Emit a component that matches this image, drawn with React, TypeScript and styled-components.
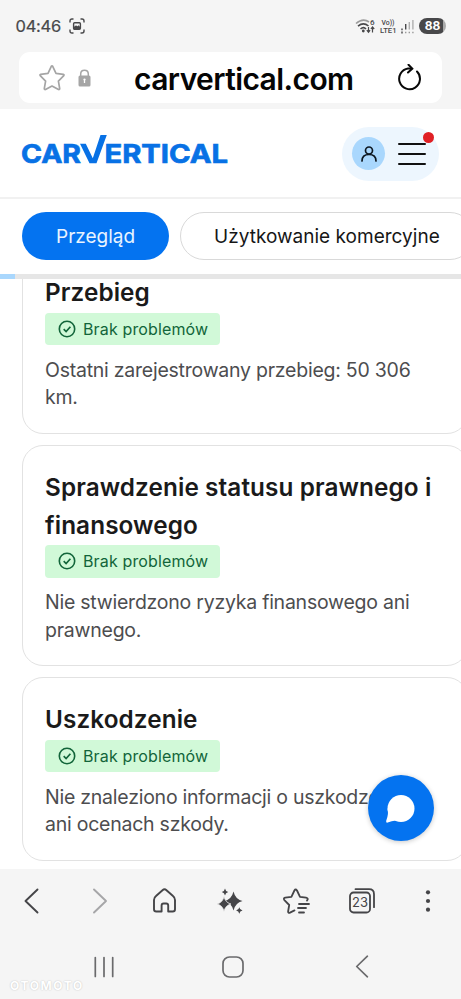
import React from 'react';
import styled, { createGlobalStyle } from 'styled-components';

const GlobalStyle = createGlobalStyle`
  * { box-sizing: border-box; }
  body { margin: 0; background: #fff; font-family: Inter, "Liberation Sans", sans-serif; }
`;

const Screen = styled.div`
  position: relative;
  width: 461px;
  height: 999px;
  display: flex;
  flex-direction: column;
  overflow: hidden;
  background: #fff;
`;

const BrowserTop = styled.header`
  height: 109px;
  flex: none;
  background: #f5f5f5;
  padding: 0 19px;
`;

const StatusBar = styled.div`
  height: 52px;
  margin: 0 -4px 0 -4px;
  display: flex;
  align-items: center;
  justify-content: space-between;
  color: #48484a;
`;

const StatusGroup = styled.div`
  display: flex;
  align-items: center;
`;

const Clock = styled.span`
  font-size: 16.5px;
  letter-spacing: -0.25px;
  margin-right: 8px;
  padding-left: 0.5px;
  -webkit-text-stroke: 0.2px #48484a;
`;

const Battery = styled.span`
  width: 27px;
  height: 16px;
  margin-left: 5px;
  border-radius: 8px;
  background: linear-gradient(90deg, #48484a 24px, #aaa 24px);
  color: #fff;
  font-size: 12px;
  font-weight: 700;
  line-height: 16px;
  text-align: center;
`;

const AddressBar = styled.div`
  height: 51px;
  border-radius: 11px;
  background: #fff;
  display: flex;
  align-items: center;
  padding: 0 21px 0 19px;
`;

const LockSlot = styled.span`
  display: flex;
  margin-left: 12px;
`;

const Address = styled.span`
  flex: 1;
  padding: 3px 0 0 43px;
  font-size: 30px;
  font-weight: 600;
  letter-spacing: -0.58px;
  line-height: 51px;
  color: #050505;
  white-space: nowrap;
`;

const SiteHeader = styled.div`
  height: 90px;
  flex: none;
  border-bottom: 2px solid #f1f1f1;
  display: flex;
  align-items: center;
  justify-content: space-between;
  padding: 1px 22px 0 20px;
`;

const AccountPill = styled.div`
  position: relative;
  width: 97px;
  height: 54px;
  border-radius: 27px;
  background: #edf6fe;
  display: flex;
  align-items: center;
  gap: 12px;
  padding-left: 10px;
`;

const Avatar = styled.div`
  width: 33px;
  height: 33px;
  border-radius: 50%;
  background: #a9d7fd;
  display: grid;
  place-items: center;
`;

const AlertDot = styled.i`
  position: absolute;
  right: 5px;
  top: 5px;
  width: 11px;
  height: 11px;
  border-radius: 50%;
  background: #e02025;
`;

const Tabs = styled.nav`
  height: 75px;
  flex: none;
  display: flex;
  gap: 11px;
  padding: 13px 0 0 22px;
`;

const Tab = styled.div<{ $active?: boolean }>`
  flex: none;
  width: ${(p) => (p.$active ? 147 : 294)}px;
  height: 48px;
  border-radius: 24px;
  border: ${(p) => (p.$active ? 'none' : '1.5px solid #d9d9d9')};
  background: ${(p) => (p.$active ? '#0473f0' : '#fff')};
  color: ${(p) => (p.$active ? '#e9f4ff' : '#161616')};
  font-size: 19px;
  letter-spacing: ${(p) => (p.$active ? 0 : 0.02)}px;
  line-height: ${(p) => (p.$active ? 50 : 48)}px;
  padding-left: ${(p) => (p.$active ? 34 : 33)}px;
  white-space: nowrap;
`;

const ProgressTrack = styled.div`
  height: 5px;
  flex: none;
  background: #e6e6e6;
`;

const ProgressFill = styled.div`
  width: 15px;
  height: 5px;
  background: #a9d7fd;
`;

const Content = styled.main`
  height: 590px;
  flex: none;
  overflow: hidden;
  padding-left: 22px;
`;

const CardList = styled.div`
  width: 446px;
  margin-top: -29px;
  display: flex;
  flex-direction: column;
  gap: 11px;
`;

const CardBox = styled.section<{ $height: number }>`
  height: ${(p) => p.$height}px;
  border: 1px solid #e2e2e2;
  border-radius: 21px;
  padding: 23px 0 0 22px;
  flex: none;
`;

const CardTitle = styled.h2`
  margin: 0;
  font-size: 24.3px;
  font-weight: 600;
  line-height: 37.6px;
  letter-spacing: 0.1px;
  color: #1a1a1a;
  white-space: nowrap;
`;

const Badge = styled.div`
  width: 175px;
  height: 32.5px;
  margin-top: 1px;
  border-radius: 4px;
  background: #d1f9d8;
  color: #12653a;
  display: flex;
  align-items: center;
  gap: 7px;
  padding-left: 13px;
  font-size: 16px;
  letter-spacing: 0.14px;
  white-space: nowrap;
`;

const CardText = styled.p`
  margin: 11.5px 0 0;
  font-size: 19.5px;
  line-height: 27.4px;
  letter-spacing: -0.24px;
  color: #4d4d4f;
  white-space: nowrap;
`;

const ChatButton = styled.div`
  position: absolute;
  left: 368px;
  top: 775px;
  width: 66px;
  height: 66px;
  border-radius: 50%;
  background: #0473f0;
  box-shadow: 0 1px 5px rgba(0, 0, 0, 0.22);
`;

const BrowserBottom = styled.footer`
  height: 130px;
  flex: none;
  background: #f5f5f5;
  display: flex;
  flex-direction: column;
`;

const Toolbar = styled.div`
  height: 65px;
  display: grid;
  grid-template-columns: repeat(7, 66px);
  justify-items: center;
  align-items: center;
  margin-left: -1px;
  padding-bottom: 1px;
`;

const SystemNav = styled.div`
  height: 65px;
  display: grid;
  grid-template-columns: repeat(3, 129px);
  justify-items: center;
  align-items: center;
  padding-left: 39.5px;
`;

const Watermark = styled.div`
  position: absolute;
  left: 10px;
  top: 978px;
  font-size: 12px;
  font-weight: 700;
  letter-spacing: 1.6px;
  line-height: 15px;
  color: #fff;
  text-shadow: 0 0 1.5px #b8b8b8;
`;

const ScreenshotIcon = () => (
  <svg width="16" height="16" viewBox="0 0 16 16" fill="none" stroke="#48484a" strokeWidth="1.4">
    <path d="M1 4.500V3Q1 1 3 1h1.500M11.500 1H13q2 0 2 2v1.500M15 11.500V13q0 2-2 2h-1.500M4.500 15H3q-2 0-2-2v-1.500" />
    <rect x="4.600" y="4.800" width="6.800" height="6.400" rx="1" />
    <path d="M5 9l2-1.600 1.400 1 1-.8L11 9v2H5z" fill="#48484a" stroke="none" />
    <path d="M5 9.500l2-1.500 1.500 1 1-.8 1.500 1.300" strokeWidth="1" />
  </svg>
);

const SignalIcons = () => (
  <svg width="59" height="18" viewBox="0 0 59 18" fill="none">
    <g stroke="#48484a" strokeWidth="1.6">
      <path d="M1 6.500Q8 .5 14 5" stroke="#9b9b9b" />
      <path d="M3 9.200Q8.300 4.800 13.500 9M5.500 12q3-2.600 5.500 0" />
    </g>
    <circle cx="8.300" cy="14" r="1.400" fill="#48484a" />
    <path d="M13.500 10v5M11.800 13.200l1.700 2 1.600-2M17.500 15.500v-5M15.900 12l1.600-2 1.700 2" stroke="#48484a" strokeWidth="1.2" />
    <g fill="#48484a" fontFamily="Roboto, sans-serif" fontWeight="500">
      <text x="15" y="8" fontSize="8">6</text>
      <text x="26.500" y="7.800" fontSize="7.500" textLength="13" lengthAdjust="spacingAndGlyphs">Vo))</text>
      <text x="25" y="16.200" fontSize="7.500" textLength="16.500" lengthAdjust="spacingAndGlyphs">LTE1</text>
    </g>
    <g strokeWidth="1.400">
      <path d="M47 11.500v1.700M50.700 7v5.500" stroke="#48484a" />
      <path d="M54.300 5v7.500M57.900 3v9.500" stroke="#b0b0b0" />
      <path d="M47 14.500v2" stroke="#48484a" />
      <path d="M50.700 14.800v1.500M54.300 14.800v1.500M57.900 14.800v1.500" stroke="#999" />
    </g>
  </svg>
);

const FavoriteIcon = () => (
  <svg width="28" height="28" viewBox="0 0 28 28" fill="none" stroke="#a5a5a5" strokeWidth="1.700" strokeLinejoin="round">
    <path d="M13.300 2.300q.7-1.100 1.400 0l3.300 7 7.300 1q1.200.4.500 1.300l-5.400 5.500 1.300 7.500q0 1.200-1.200.9L14 22l-6.500 3.500q-1.200.3-1.200-.9l1.300-7.500-5.400-5.500q-.7-.9.500-1.300l7.300-1z" />
  </svg>
);

const LockIcon = () => (
  <svg width="13" height="18" viewBox="0 0 13 18">
    <path d="M2.700 8V5q0-3.700 3.800-3.700T10.300 5v3" fill="none" stroke="#a5a5a5" strokeWidth="1.500" />
    <rect x=".5" y="6.500" width="12" height="11" rx="1.500" fill="#a5a5a5" />
    <path d="M6.500 10v4" stroke="#fff" strokeWidth="1.300" />
    <circle cx="6.500" cy="10.500" r="1.100" fill="#fff" />
  </svg>
);

const ReloadIcon = () => (
  <svg width="24" height="28" viewBox="0 0 24 28" fill="none" stroke="#080808" strokeWidth="2" strokeLinecap="round">
    <path d="M20 7.500A10.400 10.400 0 1 1 11 4.500h3.500" />
    <path d="M11.500 .8l3.800 3.800-4.300 3.900" />
  </svg>
);

const Logo = () => (
  <svg width="210" height="36" viewBox="0 0 210 36" overflow="visible">
    <g fill="#0871e5" stroke="#0871e5" strokeWidth=".7" fontFamily="Inter, sans-serif" fontWeight="700" fontSize="26.300">
      <text x="1" y="27" textLength="60" lengthAdjust="spacingAndGlyphs">CAR</text>
      <text x="84.500" y="27" textLength="123.500" lengthAdjust="spacingAndGlyphs">ERTICAL</text>
    </g>
    <path d="M60 7.800h5.800l7 14.500L80.500-1h6.300L76.500 27.200h-7z" fill="#0871e5" />
  </svg>
);

const PersonIcon = () => (
  <svg width="18" height="18" viewBox="0 0 18 18" fill="none" stroke="#0d1720" strokeWidth="1.700" strokeLinecap="round">
    <circle cx="9" cy="5.500" r="3.500" />
    <path d="M2 16q0-6.500 7-6.500T16 16" />
  </svg>
);

const MenuIcon = () => (
  <svg width="30" height="26" viewBox="0 0 30 26" stroke="#111" strokeWidth="2" strokeLinecap="round">
    <path d="M2 3h26M2 13h26M2 23h26" />
  </svg>
);

const CheckIcon = () => (
  <svg width="18" height="18" viewBox="0 0 18 18" fill="none" stroke="#12653a" strokeWidth="1.600">
    <circle cx="9" cy="9" r="7.700" />
    <path d="M5.700 9.200l2.400 2.300 4.300-4.700" strokeWidth="1.700" />
  </svg>
);

const ChatIcon = () => (
  <svg width="66" height="66" viewBox="0 0 66 66" fill="#fff">
    <circle cx="33" cy="33.500" r="13.500" />
    <path d="M19.500 33.500q1.500 5-1.300 12.300-.5 2.200 1.500 1.800 4-1.800 8-2.100l6 .5z" />
  </svg>
);

const Chevron = ({ dir, color, size = 28 }: { dir: 'left' | 'right'; color: string; size?: number }) => (
  <svg width={size} height={size} viewBox="0 0 28 28" fill="none" stroke={color} strokeWidth="1.900" strokeLinecap="round" strokeLinejoin="round">
    <path d={dir === 'left' ? 'M19.500 2.500L7.500 14l12 11.500' : 'M10 2.500l12 11.500-12 11.500'} />
  </svg>
);

const HomeIcon = () => (
  <svg width="28" height="28" viewBox="0 0 28 28" fill="none" stroke="#454548" strokeWidth="1.900" strokeLinejoin="round">
    <path d="M6 9l6.500-5.800q2-1.700 4 0L23 9q2 1.600 2 4v9.200q0 2.300-2.300 2.300H18.200V18.500q0-2-2-2h-2.600q-2 0-2 2v6H6.300q-2.300 0-2.300-2.300V13q0-2.400 2-4z" />
  </svg>
);

const SparklesIcon = () => (
  <svg width="28" height="28" viewBox="0 0 28 28" fill="#454548">
    <path d="M17.500 4.500q1.800 7.700 9 9.500-7.200 1.800-9 9.500-1.800-7.700-9-9.500 7.200-1.800 9-9.500z" />
    <path d="M8 9.500q1.300 6.200 7 7.500-5.700 1.300-7 7.500-1.300-6.200-7-7.500 5.700-1.300 7-7.500z" stroke="#f5f5f5" strokeWidth=".7" />
    <path d="M9 1.500q.5 3 3.200 3.500-2.700.5-3.200 3.500-.5-3-3.200-3.500 2.700-.5 3.200-3.500zM23.300 20.200q.5 2.800 3.200 3.300-2.700.5-3.200 3.300-.5-2.800-3.200-3.300 2.700-.5 3.200-3.300z" />
  </svg>
);

const BookmarksIcon = () => (
  <svg width="28" height="28" viewBox="0 0 28 28" fill="none" stroke="#454548" strokeWidth="1.800" strokeLinecap="round" strokeLinejoin="round">
    <path d="M25 13.500q2-2-1-2.800l-6-.9-3-6.300q-1.400-2-2.600 0l-3 6.300-6.200.9q-2.200.6-.8 2.400L7.200 18l-1.100 6.500q0 2 1.900 1.100l4.500-2.200" />
    <path d="M17 17h10M16 21h8M17 25.500h5" />
  </svg>
);

const PagesIcon = () => (
  <svg width="28" height="28" viewBox="0 0 28 28" fill="none" stroke="#454548" strokeWidth="1.800" strokeLinecap="round">
    <rect x="2" y="5.500" width="20" height="20" rx="3.500" />
    <path d="M7.500 2.200H21q5 0 5 5v13" />
    <text x="12" y="20.300" fontSize="13" fontFamily="Inter, sans-serif" fill="#454548" stroke="none" textAnchor="middle">23</text>
  </svg>
);

const MoreIcon = () => (
  <svg width="28" height="28" viewBox="0 0 28 28" fill="#454548">
    <circle cx="14" cy="5.300" r="2.100" />
    <circle cx="14" cy="14" r="2.100" />
    <circle cx="14" cy="22.700" r="2.100" />
  </svg>
);

const RecentsIcon = () => (
  <svg width="24" height="24" viewBox="0 0 24 24" stroke="#6a6a6c" strokeWidth="1.700" strokeLinecap="round">
    <path d="M3.300 2.500v19M12 2.500v19M20.700 2.500v19" />
  </svg>
);

const HomeKeyIcon = () => (
  <svg width="24" height="24" viewBox="0 0 24 24" fill="none" stroke="#6a6a6c" strokeWidth="1.700">
    <rect x="2" y="2" width="20" height="20" rx="6.500" />
  </svg>
);

const cards = [
  { height: 184, title: ['Przebieg'], text: ['Ostatni zarejestrowany przebieg: 50 306', 'km.'] },
  { height: 221, title: ['Sprawdzenie statusu prawnego i', 'finansowego'], text: ['Nie stwierdzono ryzyka finansowego ani', 'prawnego.'] },
  { height: 184, title: ['Uszkodzenie'], text: ['Nie znaleziono informacji o uszkodzeniach', 'ani ocenach szkody.'] },
];

const Lines = ({ items }: { items: string[] }) => (
  <>
    {items.map((line, i) => (
      <React.Fragment key={line}>
        {i > 0 && <br />}
        {line}
      </React.Fragment>
    ))}
  </>
);

export default function App() {
  return (
    <Screen>
      <GlobalStyle />
      <BrowserTop>
        <StatusBar>
          <StatusGroup>
            <Clock>04:46</Clock>
            <ScreenshotIcon />
          </StatusGroup>
          <StatusGroup>
            <SignalIcons />
            <Battery>88</Battery>
          </StatusGroup>
        </StatusBar>
        <AddressBar>
          <FavoriteIcon />
          <LockSlot>
            <LockIcon />
          </LockSlot>
          <Address>carvertical.com</Address>
          <ReloadIcon />
        </AddressBar>
      </BrowserTop>
      <SiteHeader>
        <Logo />
        <AccountPill>
          <Avatar>
            <PersonIcon />
          </Avatar>
          <MenuIcon />
          <AlertDot />
        </AccountPill>
      </SiteHeader>
      <Tabs>
        <Tab $active>Przegląd</Tab>
        <Tab>Użytkowanie komercyjne</Tab>
      </Tabs>
      <ProgressTrack>
        <ProgressFill />
      </ProgressTrack>
      <Content>
        <CardList>
          {cards.map((card) => (
            <CardBox key={card.title[0]} $height={card.height}>
              <CardTitle>
                <Lines items={card.title} />
              </CardTitle>
              <Badge>
                <CheckIcon />
                Brak problemów
              </Badge>
              <CardText>
                <Lines items={card.text} />
              </CardText>
            </CardBox>
          ))}
        </CardList>
      </Content>
      <BrowserBottom>
        <Toolbar>
          <Chevron dir="left" color="#454548" />
          <Chevron dir="right" color="#a6a6a8" />
          <HomeIcon />
          <SparklesIcon />
          <BookmarksIcon />
          <PagesIcon />
          <MoreIcon />
        </Toolbar>
        <SystemNav>
          <RecentsIcon />
          <HomeKeyIcon />
          <Chevron dir="left" color="#6a6a6c" size={25} />
        </SystemNav>
      </BrowserBottom>
      <ChatButton>
        <ChatIcon />
      </ChatButton>
      <Watermark>OTOMOTO</Watermark>
    </Screen>
  );
}
